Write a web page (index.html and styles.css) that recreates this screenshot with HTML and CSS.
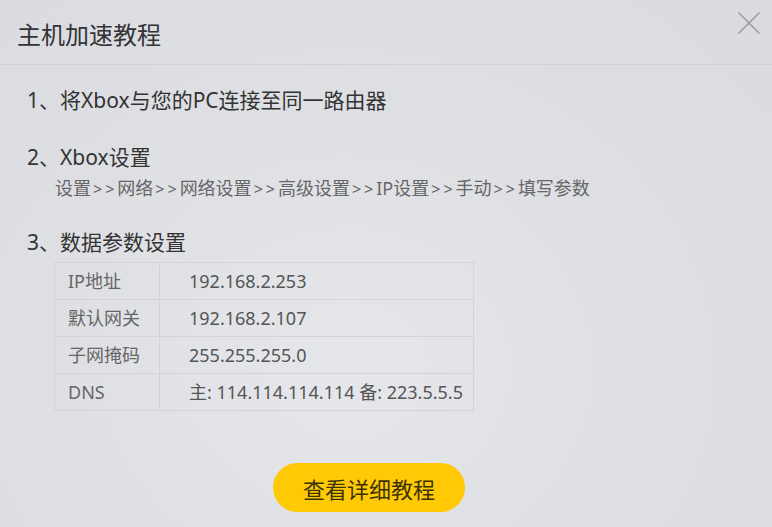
FILE: index.html
```html
<!DOCTYPE html>
<html lang="zh-CN">
<head>
<meta charset="utf-8">
<title>主机加速教程</title>
<link rel="stylesheet" href="styles.css">
</head>
<body>
<div class="dialog">
  <div class="header">
    <span class="title">主机加速教程</span>
    <span class="close">
      <svg width="24" height="24" viewBox="0 0 24 24"><path d="M1.5 1.5 L22.5 22.5 M22.5 1.5 L1.5 22.5" stroke="#9a9b9f" stroke-width="1.5" fill="none"/></svg>
    </span>
  </div>
  <div class="content">
    <div class="step step1">1、将Xbox与您的PC连接至同一路由器</div>
    <div class="step step2">2、Xbox设置</div>
    <div class="sub">设置<span class="gt">&gt;&gt;</span>网络<span class="gt">&gt;&gt;</span>网络设置<span class="gt">&gt;&gt;</span>高级设置<span class="gt">&gt;&gt;</span>IP设置<span class="gt">&gt;&gt;</span>手动<span class="gt">&gt;&gt;</span>填写参数</div>
    <div class="step step3">3、数据参数设置</div>
    <table class="params">
      <tr><td class="k">IP地址</td><td class="v">192.168.2.253</td></tr>
      <tr><td class="k">默认网关</td><td class="v">192.168.2.107</td></tr>
      <tr><td class="k">子网掩码</td><td class="v">255.255.255.0</td></tr>
      <tr><td class="k">DNS</td><td class="v">主: 114.114.114.114 备: 223.5.5.5</td></tr>
    </table>
    <div class="btn">查看详细教程</div>
  </div>
</div>
</body>
</html>
```
FILE: styles.css
```css
html, body {
  margin: 0;
  padding: 0;
}
body {
  width: 772px;
  height: 527px;
  overflow: hidden;
  font-family: "Noto Sans", "Noto Sans CJK SC", sans-serif;
  color: #333;
  background: radial-gradient(ellipse at 45% 70%, #e6e7eb 0%, #dfe0e4 45%, #dadbe0 100%);
}
.dialog {
  position: relative;
  height: 527px;
}
.header {
  height: 64px;
  border-bottom: 1px solid #d0d1d6;
  display: flex;
  align-items: center;
  padding-left: 17px;
}
.title {
  font-size: 24px;
  line-height: 28px;
  color: #333;
  padding-top: 5px;
}
.close {
  position: absolute;
  right: 11px;
  top: 11px;
  width: 24px;
  height: 24px;
}
.content {
  padding: 0 27px;
}
.step {
  font-size: 21px;
  line-height: 26px;
  color: #333;
}
.step1 { margin-top: 22px; }
.step2 { margin-top: 31px; }
.sub {
  margin-top: 8px;
  padding-left: 28px;
  font-size: 18px;
  line-height: 20px;
  color: #666;
}
.sub .gt {
  font-size: 16px;
  letter-spacing: 3px;
  padding-left: 2px;
}
.step3 { margin-top: 30px; }
.params {
  margin-top: 7px;
  margin-left: 27px;
  border-collapse: collapse;
  width: 420px;
}
.params td {
  border: 1px solid #d3d4d8;
  height: 36px;
  padding: 0;
  font-size: 18px;
  line-height: 20px;
  color: #666;
}
.params td.k {
  width: 91px;
  padding-left: 13px;
}
.params td.v {
  padding-left: 29px;
  color: #555;
}
.btn {
  margin-top: 52px;
  margin-left: 246px;
  width: 192px;
  height: 49px;
  border-radius: 25px;
  background: #ffc905;
  color: #3b3300;
  font-size: 22px;
  display: flex;
  align-items: center;
  justify-content: center;
}
```
